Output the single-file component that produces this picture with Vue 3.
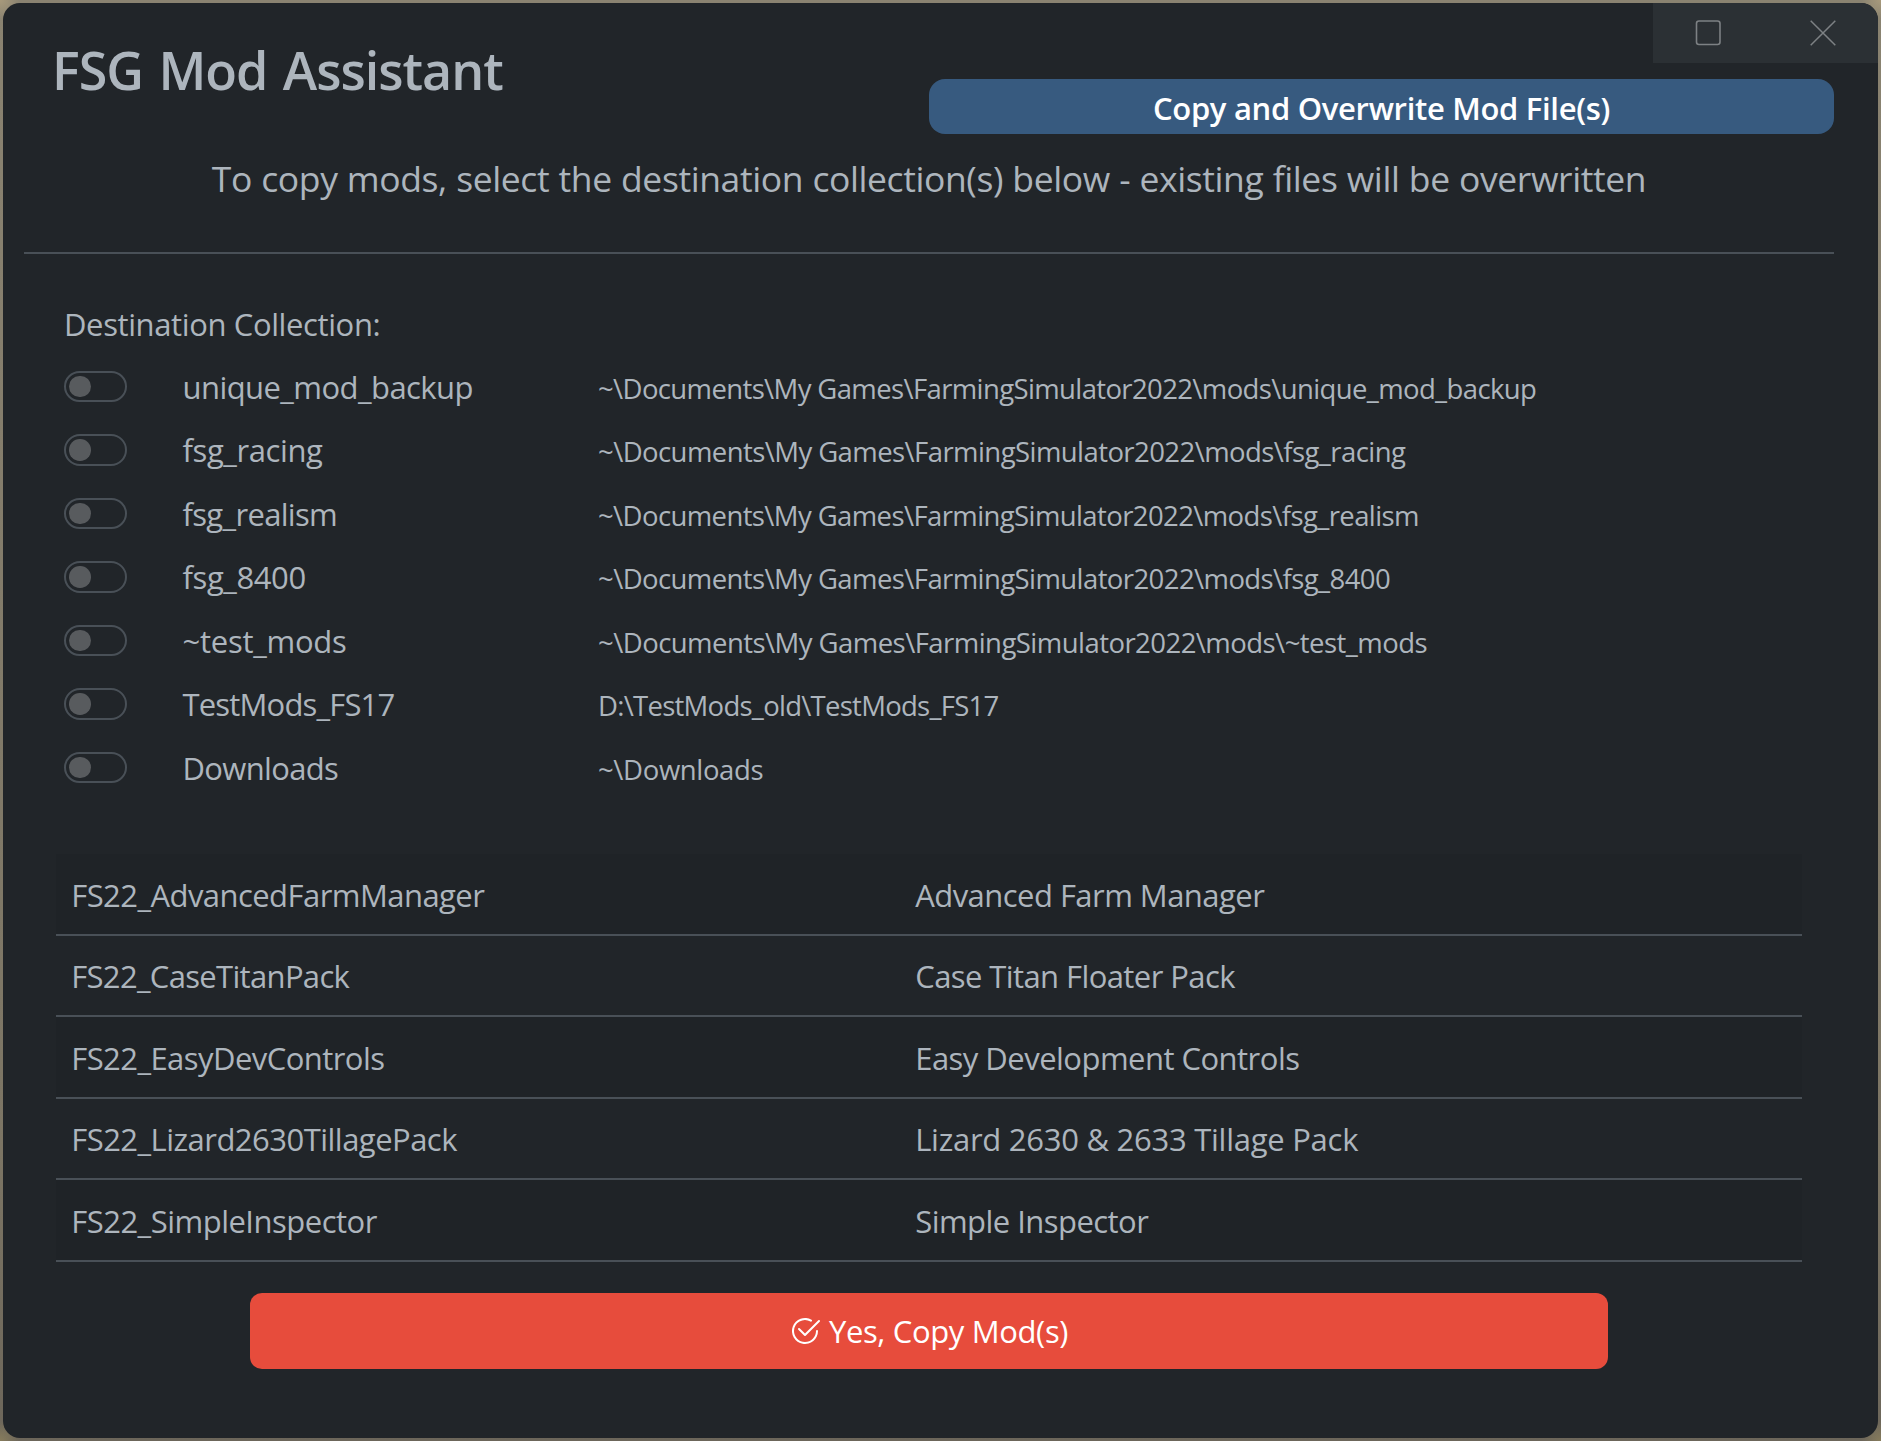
<script setup>
const collections = [
  { name: 'unique_mod_backup', nameWidth: 288, path: '~\\Documents\\My Games\\FarmingSimulator2022\\mods\\unique_mod_backup', pathWidth: 937 },
  { name: 'fsg_racing', nameWidth: 140.5, path: '~\\Documents\\My Games\\FarmingSimulator2022\\mods\\fsg_racing', pathWidth: 807 },
  { name: 'fsg_realism', nameWidth: 153.6, path: '~\\Documents\\My Games\\FarmingSimulator2022\\mods\\fsg_realism', pathWidth: 819 },
  { name: 'fsg_8400', nameWidth: 122.9, path: '~\\Documents\\My Games\\FarmingSimulator2022\\mods\\fsg_8400', pathWidth: 791 },
  { name: '~test_mods', nameWidth: 162.5, path: '~\\Documents\\My Games\\FarmingSimulator2022\\mods\\~test_mods', pathWidth: 827.5 },
  { name: 'TestMods_FS17', nameWidth: 212, path: 'D:\\TestMods_old\\TestMods_FS17', pathWidth: 398.5 },
  { name: 'Downloads', nameWidth: 152.5, path: '~\\Downloads', pathWidth: 163.5 },
]

const mods = [
  { file: 'FS22_AdvancedFarmManager', fileWidth: 411, title: 'Advanced Farm Manager', titleWidth: 350 },
  { file: 'FS22_CaseTitanPack', fileWidth: 276.4, title: 'Case Titan Floater Pack', titleWidth: 320 },
  { file: 'FS22_EasyDevControls', fileWidth: 310, title: 'Easy Development Controls', titleWidth: 381 },
  { file: 'FS22_Lizard2630TillagePack', fileWidth: 384, title: 'Lizard 2630 & 2633 Tillage Pack', titleWidth: 441 },
  { file: 'FS22_SimpleInspector', fileWidth: 303.5, title: 'Simple Inspector', titleWidth: 233 },
]

// Tracks a label so that its visible glyphs span the given width.
const ctx = document.createElement('canvas').getContext('2d')
const vFit = {
  mounted(el, { value }) {
    const style = getComputedStyle(el)
    const text = el.textContent.trim()
    ctx.font = `${style.fontWeight} ${style.fontSize} ${style.fontFamily}`
    const m = ctx.measureText(text)
    const gaps = (text.split(' ').length - 1) * (parseFloat(style.wordSpacing) || 0)
    const ink = m.actualBoundingBoxLeft + m.actualBoundingBoxRight + gaps
    el.style.letterSpacing = `${((value - ink) / (text.length - 1)).toFixed(3)}px`
  },
}
</script>

<template>
  <div class="desktop">
    <main class="window">
      <header class="header">
        <h1 class="brand"><span v-fit="447.2">FSG Mod Assistant</span></h1>
        <div class="header-side">
          <div class="controls">
            <svg class="control" viewBox="0 0 26 26" aria-label="Maximize">
              <rect x="1.5" y="1" width="23.5" height="23.5" rx="2.5" fill="none" stroke="currentColor" stroke-width="1.6" />
            </svg>
            <svg class="control" viewBox="0 0 26 26" aria-label="Close">
              <path d="M.7.7l24.6 24.6M25.3.7L.7 25.3" fill="none" stroke="currentColor" stroke-width="1.5" />
            </svg>
          </div>
          <div class="badge"><span v-fit="455.6">Copy and Overwrite Mod File(s)</span></div>
        </div>
      </header>

      <p class="lead"><span v-fit="1432">To copy mods, select the destination collection(s) below - existing files will be overwritten</span></p>

      <section class="destinations">
        <div class="label"><span v-fit="311.5">Destination Collection:</span></div>
        <div v-for="c in collections" :key="c.name" class="destination">
          <span class="switch"><span class="knob"></span></span>
          <span class="name"><span v-fit="c.nameWidth">{{ c.name }}</span></span>
          <span class="path"><span v-fit="c.pathWidth">{{ c.path }}</span></span>
        </div>
      </section>

      <section class="mods">
        <div v-for="m in mods" :key="m.file" class="mod">
          <span class="file"><span v-fit="m.fileWidth">{{ m.file }}</span></span>
          <span class="title"><span v-fit="m.titleWidth">{{ m.title }}</span></span>
        </div>
      </section>

      <button class="confirm" type="button">
        <svg class="check" viewBox="0 0 16 16" fill="currentColor">
          <path d="M2.5 8a5.5 5.5 0 0 1 8.25-4.764.5.5 0 0 0 .5-.866A6.5 6.5 0 1 0 14.5 8a.5.5 0 0 0-1 0 5.5 5.5 0 1 1-11 0z" />
          <path d="M15.354 3.354a.5.5 0 0 0-.708-.708L8 9.293 5.354 6.646a.5.5 0 1 0-.708.708l3 3a.5.5 0 0 0 .708 0l7-7z" />
        </svg>
        <span v-fit="238.4">Yes, Copy Mod(s)</span>
      </button>
    </main>
  </div>
</template>

<style>
body {
  margin: 0;
  overflow: hidden;
}
</style>

<style scoped>
.desktop {
  box-sizing: border-box;
  width: 1881px;
  height: 1441px;
  padding: 3px;
  background:
    radial-gradient(circle at 0 0, #a89a7c, transparent 20px),
    radial-gradient(circle at 100% 0, #a89a7c, transparent 20px),
    radial-gradient(circle at 0 100%, #877c5c, transparent 20px),
    radial-gradient(circle at 100% 100%, #877c5c, transparent 20px),
    linear-gradient(#8a8371, #7c7564 80%, #6c665a);
}

.window {
  width: 1875px;
  height: 1435px;
  overflow: hidden;
  border-radius: 17px;
  background: #212529;
  color: #adb5bd;
  font-family: "Open Sans", "Noto Sans", sans-serif;
  font-size: 31px;
  white-space: nowrap;
}

.header {
  display: flex;
  justify-content: space-between;
  height: 131px;
}

.brand {
  margin: 0;
  padding: 31px 0 0 49px;
  font-size: 52px;
  font-weight: 600;
  line-height: 72px;
  word-spacing: 3px;
}

.header-side {
  display: flex;
  flex-direction: column;
  align-items: flex-end;
}

.controls {
  box-sizing: border-box;
  display: flex;
  justify-content: space-between;
  align-items: center;
  width: 225px;
  height: 60px;
  padding: 0 42px;
  background: #2b3034;
  color: #7d8184;
}

.control {
  width: 26px;
  height: 26px;
}

.badge {
  box-sizing: border-box;
  width: 905px;
  height: 55px;
  margin: 16px 44px 0 0;
  padding-top: 2px;
  border-radius: 16px;
  background: #375a7f;
  color: #fff;
  font-weight: 600;
  line-height: 55px;
  text-align: center;
}

.lead {
  box-sizing: border-box;
  width: 1810px;
  height: 120px;
  margin: 0 0 0 21px;
  padding-top: 17px;
  border-bottom: 2px solid #495057;
  font-size: 35.5px;
  line-height: 54px;
  text-align: center;
  word-spacing: 0.5px;
}

.destinations {
  padding: 46.2px 0 0 61px;
}

.label {
  height: 54.5px;
  line-height: 49px;
}

.destination {
  display: flex;
  align-items: center;
  height: 63.5px;
  line-height: 63.5px;
}

.switch {
  box-sizing: border-box;
  display: flex;
  align-items: center;
  width: 63px;
  height: 31.5px;
  padding-left: 3px;
  border: 2px solid #495057;
  border-radius: 16px;
}

.knob {
  width: 21.5px;
  height: 21.5px;
  border-radius: 50%;
  background: #585b5e;
}

.name {
  width: 415.5px;
  margin-left: 55.5px;
  padding-top: 2.6px;
}

.path {
  padding-top: 4.4px;
  font-size: 27.5px;
}

.mods {
  width: 1746px;
  margin: 55.2px 0 0 53px;
}

.mod {
  box-sizing: border-box;
  display: grid;
  grid-template-columns: 844px 1fr;
  height: 81.5px;
  padding: 1.2px 0 0 15.2px;
  border-bottom: 2px solid #495057;
  line-height: 79.5px;
}

.mod:nth-child(odd) {
  background: #1f2327;
}

.confirm {
  display: flex;
  justify-content: center;
  align-items: center;
  gap: 8px;
  width: 1358px;
  height: 76px;
  margin: 31px 0 0 247px;
  padding: 0 1px 0 0;
  border: 0;
  border-radius: 12px;
  background: #e74c3c;
  color: #fff;
  font: inherit;
}

.check {
  width: 32px;
  height: 32px;
}
</style>
